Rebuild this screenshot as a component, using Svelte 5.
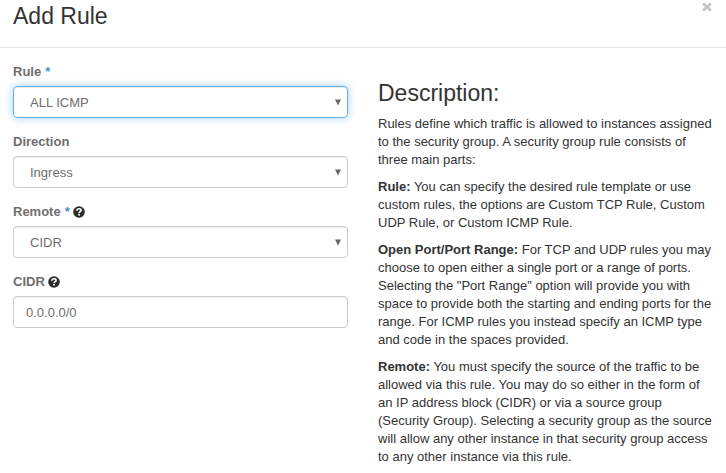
<script>
  const fields = [
    { label: 'Rule', required: true, value: 'ALL ICMP', select: true, focused: true },
    { label: 'Direction', value: 'Ingress', select: true },
    { label: 'Remote', required: true, help: true, value: 'CIDR', select: true },
    { label: 'CIDR', help: true, value: '0.0.0.0/0' }
  ];
</script>

<div class="modal">
  <header>
    <h3>Add Rule</h3>
    <button class="close" aria-label="Close">
      <svg width="10" height="10" viewBox="0 0 10 10"><path d="M1.200 1.500l7.600 7M8.800 1.500l-7.600 7" stroke="#c4c4c4" stroke-width="2.700" /></svg>
    </button>
  </header>
  <div class="body">
    <form>
      {#each fields as f}
        <div class="group">
          <div class="label">
            <span>{f.label}</span>
            {#if f.required}<span class="star">*</span>{/if}
            {#if f.help}
              <svg class="help" width="12" height="12" viewBox="0 0 12 12">
                <circle cx="6" cy="6" r="5.800" fill="#2b2b2b" />
                <path d="M3.900 4.700C4 3.400 4.900 2.800 6 2.800c1.200 0 2.100.7 2.100 1.600C8.100 5.700 6.100 5.700 6.100 7.200" fill="none" stroke="#fff" stroke-width="1.600" />
                <rect x="5.200" y="8" width="1.700" height="1.600" fill="#fff" />
              </svg>
            {/if}
          </div>
          <div class="control" class:select={f.select} class:focused={f.focused}>
            <span>{f.value}</span>
            {#if f.select}
              <svg width="6" height="7" viewBox="0 0 6 7"><path d="M0 0.500h6L3 6.500z" fill="#666" /></svg>
            {/if}
          </div>
        </div>
      {/each}
    </form>
    <section>
      <h3>Description:</h3>
      <p>Rules define which traffic is allowed to instances assigned<br />to the security group. A security group rule consists of<br />three main parts:</p>
      <p><b>Rule:</b> You can specify the desired rule template or use<br />custom rules, the options are Custom TCP Rule, Custom<br />UDP Rule, or Custom ICMP Rule.</p>
      <p><b>Open Port/Port Range:</b> For TCP and UDP rules you may<br />choose to open either a single port or a range of ports.<br />Selecting the "Port Range" option will provide you with<br />space to provide both the starting and ending ports for the<br />range. For ICMP rules you instead specify an ICMP type<br />and code in the spaces provided.</p>
      <p><b>Remote:</b> You must specify the source of the traffic to be<br />allowed via this rule. You may do so either in the form of<br />an IP address block (CIDR) or via a source group<br />(Security Group). Selecting a security group as the source<br />will allow any other instance in that security group access<br />to any other instance via this rule.</p>
    </section>
  </div>
</div>

<style>
  :global(body) { margin: 0; background: #fff; overflow: hidden; }
  .modal {
    box-sizing: border-box;
    width: 726px;
    height: 473px;
    overflow: hidden;
    font: 13px/18px "Liberation Sans", Arial, sans-serif;
    color: #333;
    white-space: nowrap;
  }
  header {
    box-sizing: border-box;
    display: flex;
    align-items: flex-start;
    justify-content: space-between;
    height: 48px;
    padding: 2px 14px 0 13px;
    border-bottom: 1px solid #e5e5e5;
  }
  h3 { margin: 0; font-size: 23px; line-height: 26px; font-weight: 400; }
  header h3 { padding-top: 1px; }
  .close {
    display: flex;
    margin: 0;
    padding: 0;
    border: 0;
    background: none;
  }
  .body { display: flex; gap: 30px; padding: 15px 13px 0; }
  form { width: 335px; flex: none; }
  .group { height: 70px; }
  .label {
    display: flex;
    align-items: center;
    gap: 4px;
    height: 18px;
    margin-bottom: 5px;
    font-weight: bold;
    color: #6e6e6e;
  }
  .help { margin-left: -1px; }
  .star { color: #4a90d0; }
  .control {
    box-sizing: border-box;
    display: flex;
    align-items: center;
    justify-content: space-between;
    height: 32px;
    padding: 0 6px 0 12px;
    border: 1px solid #ccc;
    border-radius: 4px;
    box-shadow: inset 0 1px 1px rgba(0, 0, 0, 0.075);
    color: #6e6e6e;
  }
  .control span { padding-top: 2px; }
  .select { padding-left: 16px; }
  .focused {
    border-color: #66afe9;
    box-shadow: inset 0 1px 1px rgba(0, 0, 0, 0.075), 0 0 8px rgba(102, 175, 233, 0.6);
  }
  section { padding-top: 17px; }
  section h3 { margin-bottom: 9px; }
  p { margin: 0 0 9px; }
</style>
